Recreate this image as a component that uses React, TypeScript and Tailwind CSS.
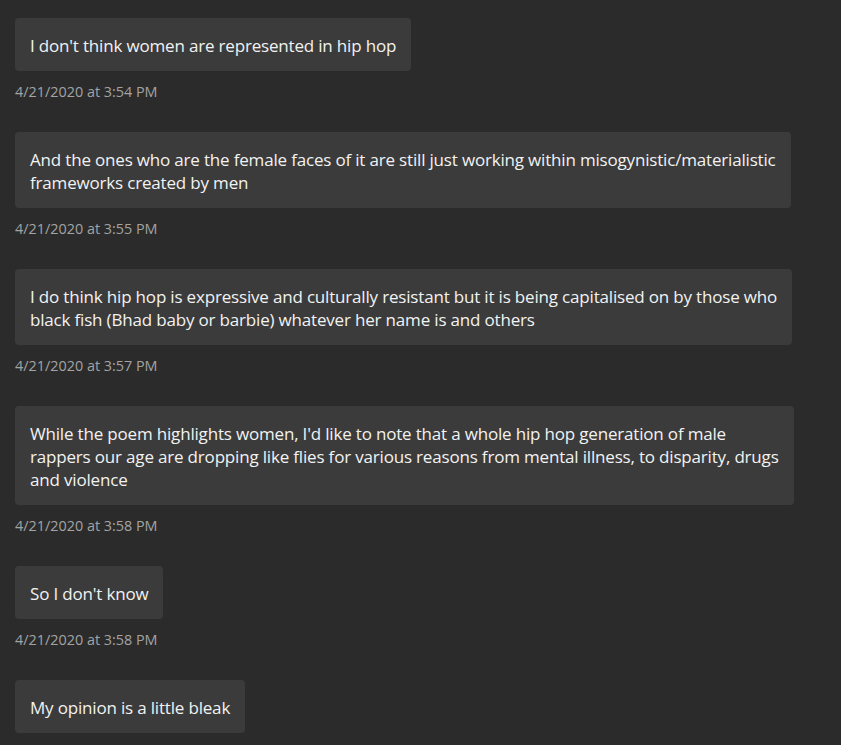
const MESSAGES = [
  { lines: ["I don't think women are represented in hip hop"], time: "4/21/2020 at 3:54 PM" },
  {
    lines: [
      "And the ones who are the female faces of it are still just working within misogynistic/materialistic",
      "frameworks created by men",
    ],
    time: "4/21/2020 at 3:55 PM",
  },
  {
    lines: [
      "I do think hip hop is expressive and culturally resistant but it is being capitalised on by those who",
      "black fish (Bhad baby or barbie) whatever her name is and others",
    ],
    time: "4/21/2020 at 3:57 PM",
  },
  {
    lines: [
      "While the poem highlights women, I'd like to note that a whole hip hop generation of male",
      "rappers our age are dropping like flies for various reasons from mental illness, to disparity, drugs",
      "and violence",
    ],
    time: "4/21/2020 at 3:58 PM",
  },
  { lines: ["So I don't know"], time: "4/21/2020 at 3:58 PM" },
  { lines: ["My opinion is a little bleak"], time: null },
];

export default function App() {
  return (
    <div
      className="min-h-[745px] w-full bg-[#2b2b2b] px-[15px] pt-[18px]"
      style={{ fontFamily: "'Open Sans', 'Noto Sans', sans-serif" }}
    >
      {MESSAGES.map((m, i) => (
        <div key={i} className="mb-[31px] flex flex-col items-start">
          <div className="w-fit rounded-[4px] bg-[#3b3b3b] px-[15px] pt-[16px] pb-[14px] text-[17px] leading-[23px] tracking-[-0.18px] text-[#f2f2f2] whitespace-nowrap">
            {m.lines.map((l, j) => (
              <div key={j}>{l}</div>
            ))}
          </div>
          {m.time && (
            <div className="mt-[12px] text-[14.4px] leading-[18px] text-[#a3a3a3]">{m.time}</div>
          )}
        </div>
      ))}
    </div>
  );
}
